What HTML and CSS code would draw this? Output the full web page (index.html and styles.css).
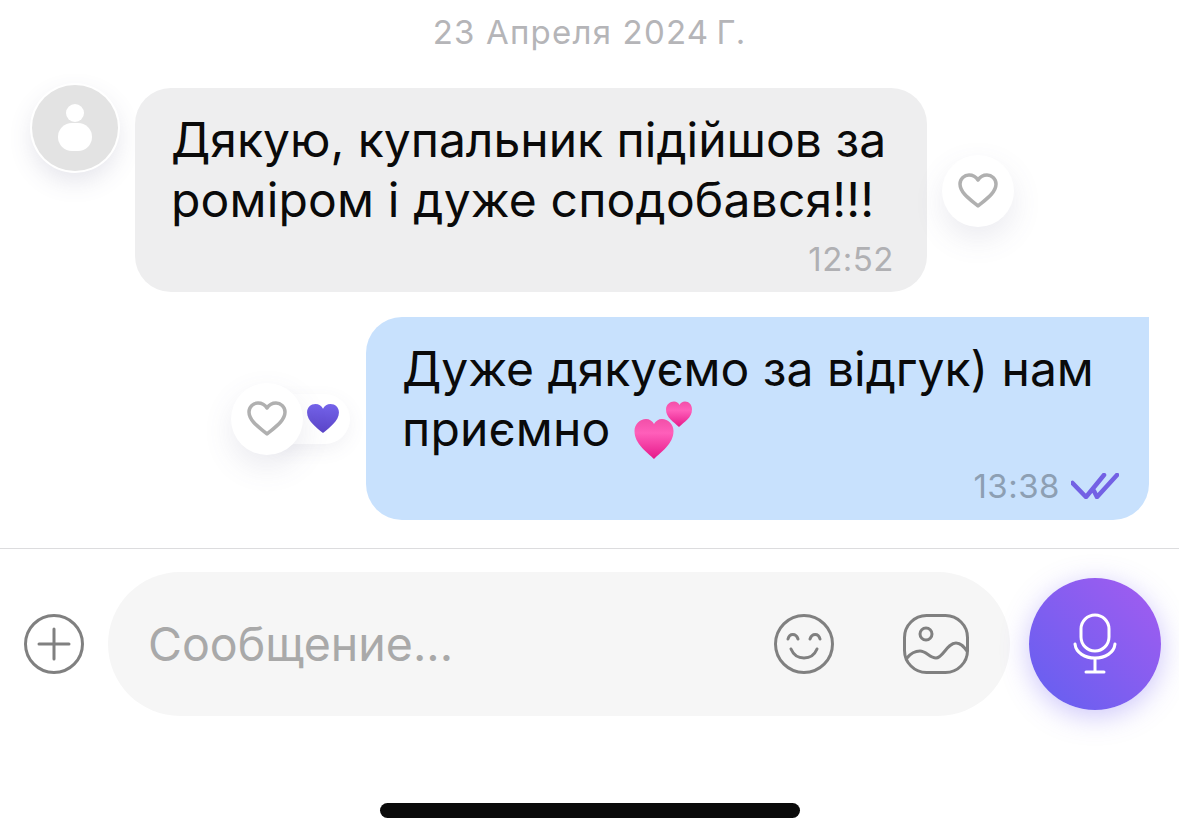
FILE: index.html
```html
<!DOCTYPE html>
<html lang="uk">
<head>
<meta charset="utf-8">
<title>Чат</title>
<link rel="stylesheet" href="styles.css">
</head>
<body>
<div class="screen">
  <main class="messages">
    <div class="date">23 Апреля 2024&#8201;Г.</div>
    <div class="row row-in">
      <div class="avatar">
        <svg viewBox="0 0 86 86" width="86" height="86"><circle cx="43" cy="28" r="9" fill="#fff"/><rect x="26" y="38" width="34" height="28" rx="14" fill="#fff"/></svg>
      </div>
      <div class="bubble bubble-in">
        <p class="text">Дякую, купальник підійшов за<br><span class="wide">роміром і дуже сподобався!!!</span></p>
        <div class="meta"><span class="time">12:52</span></div>
      </div>
      <div class="like like-in">
        <svg viewBox="0 0 40 36" width="40" height="36"><path class="heart-line" d="M20 33 C13 27 2 20 2 11 C2 5.500 6.500 2 11 2 C15 2 18 4 20 7 C22 4 25 2 29 2 C33.500 2 38 5.500 38 11 C38 20 27 27 20 33 Z"/></svg>
      </div>
    </div>
    <div class="row row-out">
      <div class="reactions">
        <div class="react-pill">
          <svg viewBox="0 0 36 32" width="34" height="30"><defs><linearGradient id="violet" x1="0" y1="0" x2="0" y2="1"><stop offset="0" stop-color="#7463ea"/><stop offset="1" stop-color="#5b45c8"/></linearGradient></defs><path fill="url(#violet)" d="M18 32 C11 26 1 19 1 10 C1 4.500 5 1 10 1 C13.500 1 16.500 3 18 6 C19.500 3 22.500 1 26 1 C31 1 35 4.500 35 10 C35 19 25 26 18 32 Z"/></svg>
        </div>
        <div class="like like-out">
          <svg viewBox="0 0 40 36" width="40" height="36"><path class="heart-line" d="M20 33 C13 27 2 20 2 11 C2 5.500 6.500 2 11 2 C15 2 18 4 20 7 C22 4 25 2 29 2 C33.500 2 38 5.500 38 11 C38 20 27 27 20 33 Z"/></svg>
        </div>
      </div>
      <div class="bubble bubble-out">
        <p class="text">Дуже дякуємо за відгук) нам<br><span class="wide">приємно</span><svg class="emoji" viewBox="0 0 60 58" width="60" height="58"><defs><linearGradient id="pink" x1="0" y1="0" x2="0" y2="1"><stop offset="0" stop-color="#f24fa8"/><stop offset=".35" stop-color="#ff5fba"/><stop offset="1" stop-color="#e6198a"/></linearGradient></defs><path fill="url(#pink)" d="M45 26 C40 21 32 17 32 8.500 C32 3.500 36 .5 40 .5 C42.500 .5 44.500 2 45.500 4 C46.500 2 48.500 .5 51 .5 C55 .5 58 3.500 58 8.500 C58 17 50 21 45 26 Z"/><path fill="url(#pink)" d="M20 58 C13 51 .5 43 .5 30 C.5 23 6 18 12 18 C15.500 18 18.500 20 20 23 C21.500 20 24.500 18 28 18 C34 18 39.500 23 39.500 30 C39.500 43 27 51 20 58 Z"/></svg></p>
        <div class="meta">
          <span class="time time-out">13:38</span>
          <svg class="ticks" viewBox="0 0 48 26" width="48" height="26"><path d="M1.500 10 L15 24 L33 2 M23 18 L26 24 L46 2" /></svg>
        </div>
      </div>
    </div>
  </main>
  <footer class="composer">
    <svg class="plus" viewBox="0 0 60 60" width="60" height="60"><circle cx="30" cy="30" r="28.500"/><path d="M15 30 H45 M30 15 V45"/></svg>
    <div class="input">
      <span class="placeholder">Сообщение...</span>
      <svg class="smile" viewBox="0 0 60 60" width="60" height="60"><circle cx="30" cy="30" r="28.500"/><path d="M14 25 C15.500 19 22 19 24 25 M36 25 C38 19 44.500 19 46 25 M17 35 C22 47 38 47 43 35"/></svg>
      <svg class="picture" viewBox="0 0 66 60" width="66" height="60"><rect x="1.500" y="1.500" width="63" height="57" rx="22"/><circle cx="23" cy="20" r="6"/><path d="M4 44 C8 39 12 37 17 37 C23 37 27 44 33 44 C40 44 44 29 53 29 C58 29 61 33 64 37"/></svg>
    </div>
    <button class="mic" type="button" aria-label="Голосове повідомлення">
      <svg viewBox="0 0 44 62" width="44" height="62"><rect x="8" y="2" width="28" height="36" rx="14"/><path d="M2 31 C3 40 12 45 22 45 C32 45 41 40 42 31 M22 45 V59 M13 59 H31"/></svg>
    </button>
  </footer>
  <div class="home"></div>
</div>
</body>
</html>
```

FILE: styles.css
```css
* { box-sizing: border-box; }
html, body { margin: 0; padding: 0; background: #fff; }
.screen {
  width: 1179px;
  height: 830px;
  overflow: hidden;
  display: flex;
  flex-direction: column;
  font-family: Inter, "Liberation Sans", Arial, sans-serif;
  color: #0a0a0a;
}
.messages {
  height: 548px;
  padding-top: 12px;
  display: flex;
  flex-direction: column;
}
.date {
  height: 40px;
  line-height: 40px;
  text-align: center;
  font-size: 33px;
  letter-spacing: 1.2px;
  color: #b5b5b8;
  margin-bottom: 36px;
}
.row { display: flex; }
.row-in { padding-left: 32px; align-items: flex-start; }
.row-out { justify-content: flex-end; padding-right: 30px; margin-top: 25px; }
.avatar {
  width: 86px;
  height: 86px;
  margin-top: -3px;
  margin-right: 17px;
  border-radius: 50%;
  background: #e3e3e3;
  box-shadow: 0 0 0 2px #fff, 0 10px 24px rgba(90, 90, 130, .16);
  flex: none;
}
.avatar svg { display: block; }
.bubble { height: 204px; padding: 22px 33px 0 36px; }
.bubble-in { width: 792px; background: #eeeeef; border-radius: 36px; }
.bubble-out { width: 783px; height: 203px; background: #c8e1fd; border-radius: 36px 0 36px 36px; }
.text {
  margin: 0;
  font-size: 48px;
  line-height: 60px;
  height: 120px;
  white-space: nowrap;
}
.wide { letter-spacing: .18px; }
.emoji { vertical-align: -13px; margin-left: 23px; }
.meta {
  display: flex;
  justify-content: flex-end;
  align-items: center;
  height: 40px;
  margin-top: 7px;
  gap: 11px;
}
.bubble-in .meta { margin-top: 9px; }
.bubble-out .meta { margin-right: -3px; }
.time { font-size: 33px; letter-spacing: .5px; color: #b0b0b3; }
.time-out { color: #8d9fb3; }
.ticks path {
  fill: none;
  stroke: #7361e4;
  stroke-width: 4.500;
  stroke-linecap: round;
  stroke-linejoin: round;
}
.like {
  width: 72px;
  height: 72px;
  border-radius: 50%;
  background: #fff;
  display: flex;
  align-items: center;
  justify-content: center;
  box-shadow: 0 12px 30px rgba(90, 90, 130, .12);
}
.like-in { margin-left: 15px; margin-top: 67px; flex: none; }
.heart-line {
  fill: none;
  stroke: #b0b0b0;
  stroke-width: 3.500;
  stroke-linejoin: round;
}
.reactions {
  display: flex;
  flex-direction: row-reverse;
  align-items: center;
  margin-top: 66px;
  height: 72px;
  margin-right: 16px;
}
.react-pill {
  width: 75px;
  height: 50px;
  margin-left: -28px;
  padding-left: 28px;
  border-radius: 0 25px 25px 0;
  background: #fff;
  display: flex;
  align-items: center;
  box-shadow: 0 6px 18px rgba(90, 90, 130, .08);
}
.react-pill svg { margin-left: 3px; margin-top: -3px; }
.like-out { position: relative; flex: none; }
.composer {
  height: 244px;
  border-top: 1px solid #dcdcde;
  padding-left: 24px;
  position: relative;
  display: flex;
  align-items: flex-start;
}
.plus { margin-top: 65px; margin-right: 24px; flex: none; }
.plus circle, .plus path, .smile circle, .smile path, .picture rect, .picture circle, .picture path {
  fill: none;
  stroke: #808080;
  stroke-width: 3;
  stroke-linecap: round;
}
.input {
  width: 902px;
  height: 144px;
  margin-top: 23px;
  border-radius: 72px;
  background: #f6f6f6;
  display: flex;
  align-items: center;
  padding-left: 40px;
  flex: none;
}
.placeholder { font-size: 46.500px; color: #a9a9a9; width: 626px; }
.smile { flex: none; }
.picture { margin-left: 69px; flex: none; }
.mic {
  width: 132px;
  height: 132px;
  margin: 29px 0 0 19px;
  padding: 0;
  border: 0;
  border-radius: 50%;
  flex: none;
  background: linear-gradient(225deg, #a45cf0 0%, #6c5ff0 85%);
  box-shadow: 0 6px 28px rgba(110, 90, 240, .35);
  display: flex;
  align-items: center;
  justify-content: center;
}
.mic rect, .mic path {
  fill: none;
  stroke: #fff;
  stroke-width: 3;
  stroke-linecap: round;
}
.home {
  position: absolute;
  left: 380px;
  top: 803px;
  width: 420px;
  height: 15px;
  border-radius: 8px;
  background: #0a0a0a;
}
```
